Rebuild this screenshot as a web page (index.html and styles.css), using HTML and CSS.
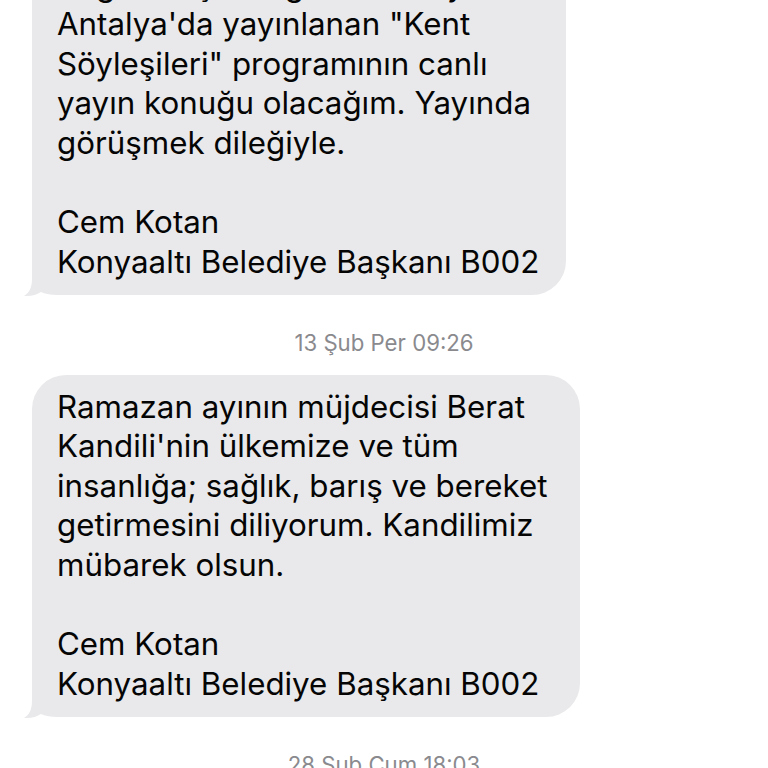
FILE: index.html
```html
<!DOCTYPE html>
<html lang="tr">
<head>
<meta charset="utf-8">
<title>Mesajlar</title>
<link rel="stylesheet" href="styles.css">
</head>
<body>
<main class="thread">
  <div class="bubble bubble-first">
    <svg class="tail" viewBox="0 0 44 36" width="44" height="36" aria-hidden="true"><path d="M10 0 L10 18 C10 27 7 32 2 35 C9 35.6 15 33.6 19 31 C24 33.6 30 34 44 34 L44 0 Z"/></svg>
    <p class="msg">Bugün akşam Ege ATV'de yerel<br>Antalya'da yayınlanan "Kent<br>Söyleşileri" programının canlı<br>yayın konuğu olacağım. Yayında<br>görüşmek dileğiyle.<br><br>Cem Kotan<br>Konyaaltı Belediye Başkanı B002</p>
  </div>
  <div class="stamp">13 Şub Per 09:26</div>
  <div class="bubble bubble-second">
    <svg class="tail" viewBox="0 0 44 36" width="44" height="36" aria-hidden="true"><path d="M10 0 L10 18 C10 27 7 32 2 35 C9 35.6 15 33.6 19 31 C24 33.6 30 34 44 34 L44 0 Z"/></svg>
    <p class="msg">Ramazan ayının müjdecisi Berat<br>Kandili'nin ülkemize ve tüm<br>insanlığa; sağlık, barış ve bereket<br>getirmesini diliyorum. Kandilimiz<br>mübarek olsun.<br><br>Cem Kotan<br>Konyaaltı Belediye Başkanı B002</p>
  </div>
  <div class="stamp">28 Şub Cum 18:03</div>
</main>
</body>
</html>
```
FILE: styles.css
```css
html, body {
  margin: 0;
  padding: 0;
  background: #ffffff;
}
body {
  width: 768px;
  height: 768px;
  overflow: hidden;
  font-family: Inter, "Noto Sans", "DejaVu Sans", sans-serif;
}
.thread {
  display: flex;
  flex-direction: column;
  align-items: flex-start;
}
.bubble {
  position: relative;
  box-sizing: border-box;
  margin-left: 32px;
  padding: 12.6px 10px 12.6px 25px;
  background: #e9e9eb;
  border-radius: 34px;
}
.bubble-first {
  width: 534px;
  margin-top: -47px;
}
.bubble-second {
  width: 548px;
}
.msg {
  position: relative;
  margin: 0;
  font-size: 31.3px;
  line-height: 39.6px;
  color: #050505;
  white-space: nowrap;
}
.tail {
  position: absolute;
  left: -10px;
  bottom: -2px;
  fill: #e9e9eb;
}
.stamp {
  align-self: stretch;
  text-align: center;
  margin: 36px 0 20px;
  font-size: 22.2px;
  line-height: 24px;
  color: #8a8a8e;
}
```
